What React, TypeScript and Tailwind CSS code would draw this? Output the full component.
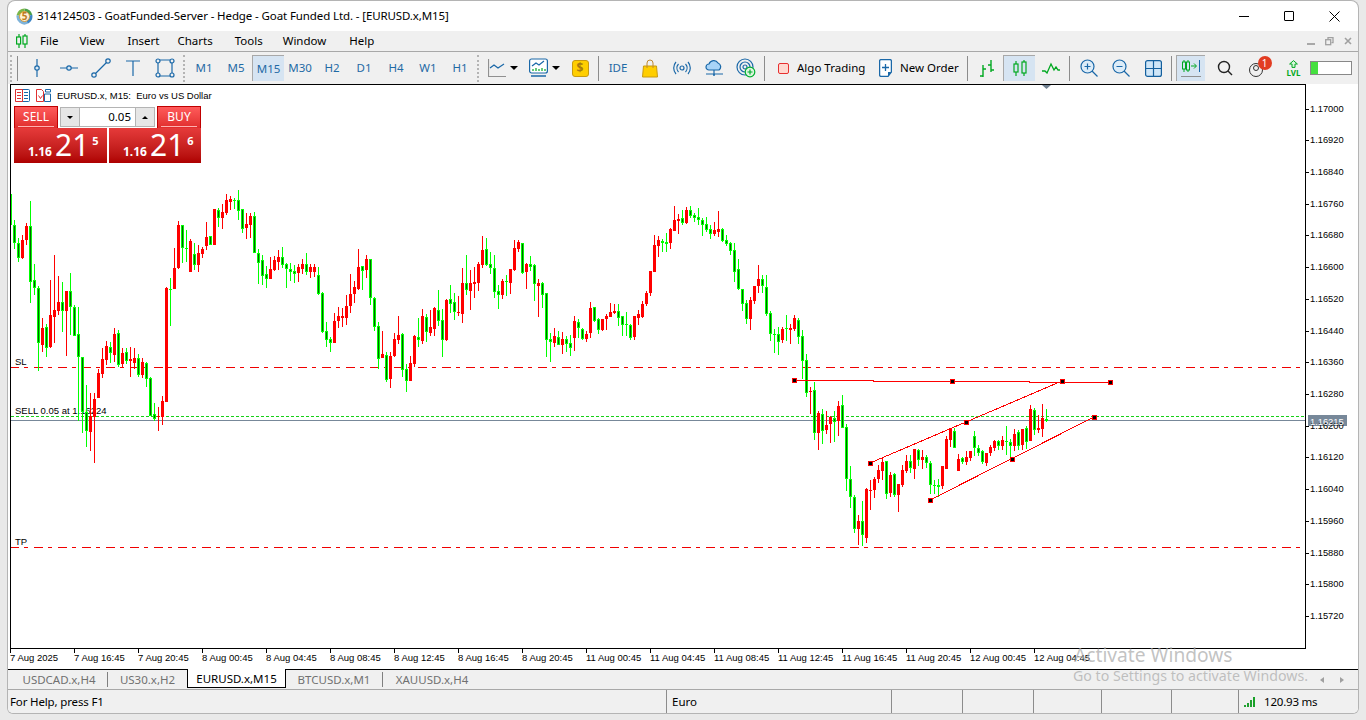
import React from 'react'

// candles read off the chart: colour, wick top, body top, body bottom, wick bottom
const GROUPS = [
  { ox: 0, oy: 180, start: 43, rows: 'g120,135,190,207 g175,190,235,245 r165,180,235,237 r130,138,180,195 g63,138,305,368 g252,300,325,345 g318,325,490,572 r415,443,495,515 g432,440,503,530 r300,405,502,505 r225,390,410,490 r288,365,392,405 g305,365,392,455 r333,333,392,528 g280,333,380,465 g375,380,468,468 g380,462,530,722 g530,530,695,760 g615,695,752,800 r640,708,755,812 r640,657,710,848 r568,578,655,655 r505,537,582,595 r482,497,540,555 g485,500,520,550 r445,462,525,545 g450,460,555,560 r505,518,552,565 g505,516,542,552 r500,538,542,592 r505,534,548,568 g522,535,585,590 r535,546,585,595 g545,550,598,622 g590,593,708,708 g670,702,718,722 r682,708,712,752 r648,662,710,735 r322,325,665,665 g295,326,328,437 r205,264,328,328 r122,135,265,268 g135,135,203,250 g150,203,208,245 r178,183,275,275 g190,222,255,270 r195,220,255,275 r200,207,222,235 r125,170,198,210 g168,168,195,195 r88,88,195,195 g85,90,113,142 r72,96,114,148 r42,60,100,105 r48,57,65,90 g55,60,62,88 g30,60,92,120 g87,88,147,160 r100,132,145,178 r100,108,135,175 g97,108,218,220 g208,220,248,312 g225,240,288,315 g258,282,296,323 r230,266,296,297 r228,240,270,272 r210,232,245,270 g200,232,255,265 g250,253,268,323 g250,268,275,302 g255,274,281,310 r252,260,280,305 r238,252,266,282 g220,252,275,285 r252,262,275,293 r253,262,277,290 g262,286,342,346 g335,340,455,458 g425,454,480,500 g470,478,488,515 r400,424,488,490 r380,408,422,443' },
  { ox: 340, oy: 190, start: 7, rows: 'r355,378,384,410 r315,347,384,405 r252,312,348,368 r273,291,312,340 r177,231,298,300 g228,228,243,300 r195,207,240,265 g207,207,323,345 g322,325,410,423 g395,408,506,537 r423,491,504,504 g487,495,570,575 r487,498,567,593 r430,447,498,500 r378,435,450,462 g430,432,540,562 g522,538,572,605 r498,519,573,573 r436,438,522,530 g384,441,450,471 r358,378,453,462 g372,381,426,457 r360,411,430,438 r350,354,417,438 g300,360,393,408 g358,390,450,500 r327,330,451,453 g285,327,342,370 g308,336,366,390 r318,366,370,378 r234,279,372,398 g195,279,300,316 r240,279,303,360 r232,276,282,323 r217,222,279,303 r138,180,225,233 g144,177,226,228 g187,222,234,252 g195,234,306,323 g285,303,315,357 r267,273,315,327 g255,273,275,318 r237,237,279,312 r150,174,240,242 r150,156,177,187 g158,159,249,251 r218,222,246,297 g198,222,231,243 g222,225,282,333 r267,279,288,381 g276,279,315,354 g309,309,450,501 g430,447,456,516 r414,438,458,471 g423,441,465,465 r426,447,465,492 g438,447,462,486 g435,459,474,498 r378,393,444,483 g387,396,414,444 g414,417,447,450 r423,432,447,456 r336,354,429,444 g351,351,393,396 g384,387,420,432 r387,387,420,423 r372,378,387,420 r339,366,381,381 r342,363,369,372 g342,363,384,408 g378,378,405,438 g366,402,405,438 g402,405,444,450 r378,378,441,450 r360,372,384,405 r333,342,381,384 r303,309,342,348 r243,243,309,318 r135,165,246,246 r138,150,168,201 g147,153,159,186 g129,156,162,186 r114,117,159,177 r48,90,123,123 r72,87,93,132' },
  { ox: 640, oy: 190, start: 127, rows: 'g60,85,98,105 r52,60,100,102 g48,60,78,84 g70,75,84,96 g54,81,90,105 g84,90,105,138 g81,102,120,126 g105,117,132,147 r96,120,132,138 r63,117,126,141 g114,117,153,156 g135,150,162,168 g156,159,183,195 g159,180,246,276 g207,237,297,300 g297,297,342,363 g330,339,387,402 r321,330,387,420 r288,288,333,342 r225,267,288,309 g255,267,288,309 g255,291,372,378 g363,369,432,453 g417,432,435,489 g411,432,456,495 r411,417,450,459 g375,414,417,453 r402,414,420,462 r375,384,417,423 g384,390,441,462 g420,438,513,567 g492,510,609,621 r590,602,606,672' },
  { ox: 790, oy: 360, start: 73, rows: 'g67,90,219,240 r153,159,219,270 g147,162,213,252 r153,195,210,222 r168,171,192,249 g153,174,186,246 r123,138,183,228 g105,135,204,204 g192,201,357,393 g318,357,411,444 g405,411,507,519 r465,483,507,555 g423,483,525,558 r384,387,534,549 r360,391,393,450 r351,357,390,414 r315,330,357,369 r294,306,333,360 g303,303,402,417 r336,345,399,411 g339,342,405,411 r372,372,405,456 r315,330,375,381 r285,303,333,339 g285,303,324,339 r267,267,327,357 g267,270,300,318 r270,291,300,327 g285,291,309,324 g303,309,375,402 g360,375,378,402 g357,375,381,411 r318,318,378,387 r228,237,327,327 r204,207,240,261 g204,213,263,263 r282,297,333,333 g291,294,306,312 r273,291,306,315 r273,273,294,303 g213,228,264,288 g255,264,279,288 g270,273,306,312 r279,279,309,318 r255,261,279,288 r240,243,264,273 g240,243,258,270 r228,240,258,270 g198,243,246,285 g237,246,258,300 r207,222,258,273 g210,216,258,270 r207,207,255,270 g198,204,246,267 r135,147,243,243 g144,150,210,225 r165,204,210,219 r132,174,207,231 g147,177,183,186' },
]

const candles = GROUPS.flatMap((g) =>
  g.rows.split(' ').map((row, i) => {
    const [top, bt, bb, bot] = row.slice(1).split(',').map((n) => Math.round(g.oy + Number(n) / 3))
    return { up: row[0] === 'g', x: Math.floor(g.ox + (g.start + i * 12) / 3), top, bt, bb, bot }
  })
)

const PRICES = ['1.17000', '1.16920', '1.16840', '1.16760', '1.16680', '1.16600', '1.16520', '1.16440', '1.16360', '1.16280', '1.16200', '1.16120', '1.16040', '1.15960', '1.15880', '1.15800', '1.15720']
const DATES = ['7 Aug 2025', '7 Aug 16:45', '7 Aug 20:45', '8 Aug 00:45', '8 Aug 04:45', '8 Aug 08:45', '8 Aug 12:45', '8 Aug 16:45', '8 Aug 20:45', '11 Aug 00:45', '11 Aug 04:45', '11 Aug 08:45', '11 Aug 12:45', '11 Aug 16:45', '11 Aug 20:45', '12 Aug 00:45', '12 Aug 04:45']
const PERIODS = ['M1', 'M5', 'M15', 'M30', 'H2', 'D1', 'H4', 'W1', 'H1']
const HANDLES = [[794, 380], [952, 381], [1110, 382], [870, 463], [966, 422], [1062, 381], [930, 500], [1012, 459], [1094, 417]]

const BLUE = '#1a68a8'

function Ic({ children, w = 24, h = 24 }: { children: React.ReactNode; w?: number; h?: number }) {
  return (
    <svg width={w} height={h} viewBox={`0 0 ${w} ${h}`} fill="none" strokeWidth="1.2">
      {children}
    </svg>
  )
}

function Tool({ children, active, w = 'w-[32px]' }: { children: React.ReactNode; active?: boolean; w?: string }) {
  return (
    <div className={`${w} h-[26px] shrink-0 flex items-center justify-center ${active ? 'bg-[#d6e4f2] border-l border-t border-[#a8a8a8]' : ''}`}>
      {children}
    </div>
  )
}

const Sep = ({ cls }: { cls: string }) => <div className={`w-px h-[25px] bg-[#8c8c8c] shrink-0 ${cls}`} />

const Grip = ({ cls }: { cls: string }) => (
  <div className={`w-[2px] h-[27px] shrink-0 border-l-2 border-dotted border-[#b4b4b4] ${cls}`} />
)

const Caret = () => <span className="w-0 h-0 border-x-[4px] border-x-transparent border-t-[4px] border-t-black ml-[4px]" />

function Chart() {
  return (
    <svg width="1350" height="585" viewBox="8 84 1350 585" className="block font-['Liberation_Sans',sans-serif]">
      <text x="15" y="365" className="text-[9.5px] fill-black">SL</text>
      <text x="15" y="545" className="text-[9.5px] fill-black">TP</text>
      <text x="15" y="414" className="text-[9.5px] fill-black">SELL 0.05 at 1.16224</text>
      <g shapeRendering="crispEdges">
        <line x1="10" x2="1301" y1="367.5" y2="367.5" stroke="#f00000" strokeDasharray="9 5 4 6" />
        <line x1="10" x2="1301" y1="547.5" y2="547.5" stroke="#f00000" strokeDasharray="9 5 4 6" />
        <line x1="11" x2="1305" y1="420.5" y2="420.5" stroke="#778899" />
        <line x1="11" x2="1305" y1="416.5" y2="416.5" stroke="#18d018" strokeDasharray="3 2" />
        <rect x="11" y="194" width="1" height="31" fill="#00ff00" />
        {candles.map((c, i) => (
          <g key={i}>
            <rect x={c.x} y={c.top} width="1" height={Math.max(c.bot - c.top, 1)} fill={c.up ? '#00ff00' : '#ff0000'} />
            <rect x={c.x - 1} y={c.bt} width="3" height={Math.max(c.bb - c.bt, 1)} fill={c.up ? '#00ff00' : '#ff0000'} />
            {c.up && c.bb - c.bt > 2 && <rect x={c.x} y={c.bt + 1} width="1" height={c.bb - c.bt - 2} fill="#006400" />}
          </g>
        ))}
        <polyline points="794,380 873,380.5 873,381.5 1029,381.5 1029,382.5 1110,382.5" stroke="#ff0000" fill="none" />
        <line x1="870" y1="463" x2="1062" y2="381" stroke="#ff0000" />
        <line x1="930" y1="500" x2="1094" y2="417" stroke="#ff0000" />
        {HANDLES.map(([x, y]) => (
          <g key={x}>
            <rect x={x - 2} y={y - 2} width="5" height="5" fill="#ff0000" />
            <rect x={x - 1} y={y - 1} width="3" height="3" fill="#000" />
          </g>
        ))}
        <rect x="10.5" y="84.5" width="1295" height="564" fill="none" stroke="#000" />
        {PRICES.map((p, i) => (
          <line key={p} x1="1305" x2="1309" y1={Math.round(108.5 + i * 31.72) + 0.5} y2={Math.round(108.5 + i * 31.72) + 0.5} stroke="#000" />
        ))}
        {DATES.map((d, i) => (
          <line key={d} x1={10.5 + i * 64} x2={10.5 + i * 64} y1="648" y2="653" stroke="#000" />
        ))}
        <rect x="1308" y="415" width="39" height="11" fill="#778899" />
      </g>
      {PRICES.map((p, i) => (
        <text key={p} x="1310" y={Math.round(108.5 + i * 31.72) + 3} className="text-[9.3px] fill-black">{p}</text>
      ))}
      <text x="1310" y="424.5" className="text-[9.3px] fill-white">1.16215</text>
      {DATES.map((d, i) => (
        <text key={d} x={10 + i * 64} y="661" className="text-[9.5px] fill-black">{d}</text>
      ))}
      <polygon points="1042,85 1051,85 1046.5,89" fill="#708090" />
    </svg>
  )
}

function BigPrice({ last, cls }: { last: string; cls: string }) {
  return (
    <div className={`h-[35px] bg-gradient-to-b from-[#e63a3a] to-[#ae0000] text-white flex items-end ${cls}`}>
      <span className="text-[12px] font-bold leading-none mb-[5px] ml-[14px]">1.16</span>
      <span className="text-[30px] leading-none mb-[3px] ml-[3px]">21</span>
      <span className="text-[11px] font-bold leading-none mb-[17px] ml-[3px]">{last}</span>
    </div>
  )
}

function TradePanel() {
  return (
    <div className="absolute left-[6px] top-[22px] w-[187px] flex flex-col">
      <div className="flex h-[22px] justify-between">
        <div className="w-[44px] bg-gradient-to-b from-[#ff5a5a] to-[#e02c2c] border-t border-x border-[#c00000] text-center">
          <div className="mx-[3px] h-[20px] border-b border-[#ffb0b0] text-white text-[12px] leading-[19px]">SELL</div>
        </div>
        <div className="w-[95px] h-[20px] mt-px flex border border-[#b4b4b4] bg-white">
          <div className="w-[19px] bg-[#e6e6e6] border-r border-[#b4b4b4] flex items-center justify-center">
            <span className="w-0 h-0 border-x-[3px] border-x-transparent border-t-[3px] border-t-black" />
          </div>
          <div className="flex-1 text-right pr-[4px] text-[11.5px] leading-[18px] text-black">0.05</div>
          <div className="w-[19px] bg-[#e6e6e6] border-l border-[#b4b4b4] flex items-center justify-center">
            <span className="w-0 h-0 border-x-[3px] border-x-transparent border-b-[3px] border-b-black" />
          </div>
        </div>
        <div className="w-[44px] bg-gradient-to-b from-[#ff5a5a] to-[#e02c2c] border-t border-x border-[#c00000] text-center">
          <div className="mx-[3px] h-[20px] border-b border-[#ffb0b0] text-white text-[12px] leading-[19px]">BUY</div>
        </div>
      </div>
      <div className="flex justify-between">
        <BigPrice last="5" cls="w-[93px]" />
        <BigPrice last="6" cls="w-[92px]" />
      </div>
    </div>
  )
}

export default function App() {
  return (
    <div className="w-[1366px] h-[720px] overflow-hidden bg-[#e9e9e9] pl-[8px] pr-[8px] pt-px pb-[7px] font-['Noto_Sans',sans-serif] text-black">
      <div className="relative w-[1350px] h-[712px] bg-white rounded-t-[7px] rounded-b-[5px] overflow-hidden shadow-[0_0_0_1px_#b4b4b4] flex flex-col">
        {/* Title bar */}
        <div className="h-[30px] shrink-0 flex items-center pl-[8px]">
          <svg width="17" height="17" viewBox="0 0 17 17">
            <path d="M8.5 .5a8 8 0 0 1 7.8 6.300L12 8a3.500 3.500 0 0 0-3.500-3z" fill="#4aa04a" />
            <path d="M16.300 6.800a8 8 0 0 1-4.500 9L10 12a3.500 3.500 0 0 0 2-4z" fill="#3d86c6" />
            <path d="M11.800 15.800A8 8 0 0 1 .6 7L5 8a3.500 3.500 0 0 0 5 4z" fill="#7fb3d9" />
            <path d="M.6 7A8 8 0 0 1 8.500 .5v4.500A3.500 3.500 0 0 0 5 8z" fill="#7ab648" />
            <circle cx="8.5" cy="8.5" r="5" fill="#fff3d8" stroke="#d59a3a" />
            <text x="8.5" y="12" textAnchor="middle" className="text-[10px] font-bold" fill="#c07a20">5</text>
          </svg>
          <span className="ml-[4px] text-[11.5px] tracking-[-0.11px]">314124503 - GoatFunded-Server - Hedge - Goat Funded Ltd. - [EURUSD.x,M15]</span>
          <div className="ml-auto flex items-center">
            <div className="w-[45px] flex justify-center"><span className="w-[10px] h-px bg-black" /></div>
            <div className="w-[45px] flex justify-center"><span className="w-[10px] h-[10px] border border-black rounded-[1px]" /></div>
            <div className="w-[46px] flex justify-center mr-[1px]">
              <svg width="11" height="11" viewBox="0 0 11 11" stroke="#000"><path d="M.5.5l10 10M10.500.5l-10 10" /></svg>
            </div>
          </div>
        </div>

        {/* Menu */}
        <div className="h-[21px] shrink-0 bg-[#f0f0f0] border-b border-[#a8a8a8] flex items-center pl-[8px] text-[11.5px]">
          <svg width="12" height="14" viewBox="0 0 12 14" fill="none" stroke="#00a820" strokeWidth="1.2">
            <path d="M3 0v14M9 0v14" />
            <rect x=".6" y="3" width="4" height="7" fill="#f0f0f0" />
            <rect x="7" y="2" width="4" height="8" fill="#f0f0f0" />
          </svg>
          <span className="ml-[12px]">File</span>
          <span className="ml-[21px]">View</span>
          <span className="ml-[23px]">Insert</span>
          <span className="ml-[18px]">Charts</span>
          <span className="ml-[22px]">Tools</span>
          <span className="ml-[20px]">Window</span>
          <span className="ml-[23px]">Help</span>
          <div className="ml-auto flex items-center gap-[10px] pr-[6px] text-[#a0a0a0]">
            <span className="w-[8px] h-[2px] mt-[5px] bg-[#a8a8a8]" />
            <svg width="9" height="9" viewBox="0 0 9 9" fill="none" stroke="#a0a0a0" strokeWidth="1.3"><rect x=".7" y="2.7" width="5" height="5" /><path d="M3 2V.7h5v5H6.500" /></svg>
            <svg width="8" height="8" viewBox="0 0 8 8" stroke="#a0a0a0" strokeWidth="1.6"><path d="M1 1l6 6M7 1L1 7" /></svg>
          </div>
        </div>

        {/* Toolbar */}
        <div className="h-[32px] shrink-0 bg-[#f0f0f0] flex items-center pl-[2px] text-[11.5px]">
          <Grip cls="" />
          <Sep cls="ml-[5px] mr-[3px]" />
          <Tool>
            <Ic><path d="M12 3v18" stroke={BLUE} /><circle cx="12" cy="12" r="2.2" fill="#d8e8f4" stroke={BLUE} /></Ic>
          </Tool>
          <Tool>
            <Ic><path d="M3 12h18" stroke={BLUE} /><circle cx="12" cy="12" r="2.2" fill="#d8e8f4" stroke={BLUE} /></Ic>
          </Tool>
          <Tool>
            <Ic><path d="M5 19L19 5" stroke={BLUE} /><circle cx="5" cy="19" r="2.2" fill="#f0f0f0" stroke={BLUE} /><circle cx="19" cy="5" r="2.2" fill="#f0f0f0" stroke={BLUE} /></Ic>
          </Tool>
          <Tool>
            <Ic><path d="M5 5h14M12 5v15" stroke={BLUE} /></Ic>
          </Tool>
          <Tool>
            <Ic><path d="M5 4h14M5 20h14M5 4v16M19 4v16" stroke={BLUE} /><circle cx="5" cy="5" r="2" fill="#f0f0f0" stroke={BLUE} /><circle cx="19" cy="5" r="2" fill="#f0f0f0" stroke={BLUE} /><circle cx="5" cy="19" r="2" fill="#f0f0f0" stroke={BLUE} /><circle cx="19" cy="19" r="2" fill="#f0f0f0" stroke={BLUE} /></Ic>
          </Tool>
          <Grip cls="ml-[2px] mr-[3px]" />
          {PERIODS.map((p) => (
            <Tool key={p} active={p === 'M15'}>
              <span className="text-[#1f6aa5]">{p}</span>
            </Tool>
          ))}
          <Grip cls="ml-[1px] mr-[3px]" />
          <Tool w="w-[42px]">
            <Ic w={18} h={18}><path d="M.5 0v17.500H18" stroke="#909090" /><path d="M2 9l4-3 4 3 6-4" stroke={BLUE} /></Ic>
            <Caret />
          </Tool>
          <Tool w="w-[40px]">
            <Ic w={19} h={20}>
              <rect x=".6" y="1" width="17.800" height="14" rx="2" fill="#fff" stroke={BLUE} />
              <path d="M3 8l4-3 3 2 5-4" stroke={BLUE} />
              <path d="M4 13v-2M7 13v-3M10 13v-2M13 13v-3M16 13v-2" stroke="#00a820" />
              <path d="M2 18h15" stroke={BLUE} strokeWidth="1.6" />
            </Ic>
            <Caret />
          </Tool>
          <Tool>
            <div className="w-[17px] h-[17px] rounded-[3px] bg-[#ffce00] border border-[#c89a10] flex items-center justify-center text-[12px] font-bold text-[#a87a10] leading-none">$</div>
          </Tool>
          <Sep cls="ml-[2px] mr-[3px]" />
          <Tool><span className="text-[#1f6aa5]">IDE</span></Tool>
          <Tool>
            <svg width="16" height="19" viewBox="0 0 16 19" fill="none">
              <path d="M1.500 7h13l1 11H.5z" fill="#ffce00" stroke="#c89a10" />
              <path d="M5 9V4a3 3 0 0 1 6 0v5" stroke="#c08a30" />
            </svg>
          </Tool>
          <Tool>
            <Ic w={18} h={14}>
              <circle cx="9" cy="7" r="2" stroke={BLUE} />
              <path d="M5.500 3a6 6 0 0 0 0 8M12.500 3a6 6 0 0 1 0 8M3 1a9 9 0 0 0 0 12M15 1a9 9 0 0 1 0 12" stroke={BLUE} />
            </Ic>
          </Tool>
          <Tool>
            <Ic w={18} h={17}>
              <path d="M4 10a3 3 0 0 1 0-6 5 5 0 0 1 9-1 4 4 0 0 1 1 7z" fill="#a8d4f8" stroke={BLUE} />
              <path d="M9 10v5M1 14h17" stroke={BLUE} />
              <circle cx="9" cy="15" r="1" fill={BLUE} />
            </Ic>
          </Tool>
          <Tool>
            <Ic w={20} h={20}>
              <circle cx="9" cy="9" r="8" stroke={BLUE} />
              <circle cx="9" cy="9" r="5" stroke={BLUE} />
              <circle cx="9" cy="9" r="2" stroke={BLUE} />
              <circle cx="14" cy="14" r="4.800" fill="#dff5df" stroke="#00b030" />
              <path d="M14 11.500v5M11.500 14h5" stroke="#00b030" />
            </Ic>
          </Tool>
          <Sep cls="ml-[2px] mr-[13px]" />
          <div className="w-[11px] h-[11px] rounded-[2px] bg-[#ffd8d0] border border-[#e83030] shrink-0" />
          <span className="ml-[8px] w-[82px] shrink-0">Algo Trading</span>
          <svg width="13" height="18" viewBox="0 0 13 18" fill="none" strokeWidth="1.3" className="shrink-0">
            <path d="M2 .6h9a1.400 1.400 0 0 1 1.400 1.400v11L9 17.400H2A1.400 1.400 0 0 1 .6 16V2A1.400 1.400 0 0 1 2 .6z" fill="#fff" stroke={BLUE} />
            <path d="M6.500 5v7M3 8.500h7" stroke={BLUE} />
            <path d="M9 17.400V13h3.400z" fill={BLUE} />
          </svg>
          <span className="ml-[8px] w-[67px] shrink-0">New Order</span>
          <Sep cls="mr-[3px]" />
          <Tool>
            <Ic w={18} h={18}>
              <path d="M5 6v12M2 17h3M5 10h3M13 1v12M10 6h3M13 11h3" stroke="#00a820" strokeWidth="1.4" />
            </Ic>
          </Tool>
          <Tool active>
            <Ic w={14} h={17}>
              <path d="M3 1v15M11 0v16" stroke="#00a820" />
              <rect x="1" y="4" width="4" height="8" fill="#d6e4f2" stroke="#00a820" />
              <rect x="9" y="2" width="4" height="11" fill="#d6e4f2" stroke="#00a820" />
            </Ic>
          </Tool>
          <Tool>
            <Ic w={18} h={12}>
              <path d="M0 9h3l2 2 4-9 3 6 2-3 2 3h2" stroke="#00a820" strokeWidth="1.3" />
            </Ic>
          </Tool>
          <Sep cls="ml-[2px] mr-[3px]" />
          <Tool>
            <Ic w={18} h={18}>
              <circle cx="7.500" cy="7.500" r="6.500" fill="#dcecf8" stroke={BLUE} />
              <path d="M12 12l5.500 5.500" stroke={BLUE} />
              <path d="M7.500 4.500v6M4.500 7.500h6" stroke={BLUE} />
            </Ic>
          </Tool>
          <Tool>
            <Ic w={18} h={18}>
              <circle cx="7.500" cy="7.500" r="6.500" fill="#dcecf8" stroke={BLUE} />
              <path d="M12 12l5.500 5.500" stroke={BLUE} />
              <path d="M4.500 7.500h6" stroke={BLUE} />
            </Ic>
          </Tool>
          <Tool>
            <svg width="17" height="17" viewBox="0 0 17 17" fill="#cfe6f8" stroke="#14609e" strokeWidth="1.2">
              <rect x=".6" y=".6" width="15.800" height="15.800" rx="2" />
              <path d="M8.500 .6v15.800M.6 8.500h15.800" />
            </svg>
          </Tool>
          <Sep cls="ml-[2px] mr-[4px]" />
          <Tool active w="w-[29px]">
            <svg width="20" height="19" viewBox="0 0 20 19" fill="none">
              <path d="M3 1v12M7 1v12" stroke="#00a820" />
              <rect x="1.500" y="3" width="3" height="7" fill="#d6e4f2" stroke="#00a820" />
              <rect x="5.500" y="3" width="3" height="8" fill="#d6e4f2" stroke="#00a820" />
              <path d="M10 7h5M13 4.500L15.500 7 13 9.500" stroke="#00a820" />
              <path d="M18.500 1v12" stroke="#1a68a8" />
              <path d="M0 17.500h20" stroke="#909090" />
            </svg>
          </Tool>
          <div className="w-[4px] shrink-0" />
          <Tool>
            <Ic w={16} h={16}><circle cx="7" cy="7" r="5.500" stroke="#222" strokeWidth="1.4" /><path d="M11 11l4 4" stroke="#222" strokeWidth="1.4" /></Ic>
          </Tool>
          <Tool>
            <div className="relative w-[14px] h-[14px] rounded-full border border-[#333] mt-[3px] mr-[3px]">
              <span className="absolute left-[3px] top-[1px] w-[6px] h-[6px] rounded-full border border-[#333]" />
              <span className="absolute -right-[10px] -top-[8px] w-[14px] h-[14px] rounded-full bg-[#e23c22] text-white text-[10px] leading-[14px] text-center">1</span>
            </div>
          </Tool>
          <div className="w-[4px] shrink-0" />
          <Tool w="w-[33px]">
            <div className="flex flex-col items-center text-[#00a820] leading-none mt-[1px]">
              <svg width="9" height="8" viewBox="0 0 9 8" fill="#d8f5dc" stroke="#00a820"><path d="M4.500 .6L8.400 4H6v3.400H3V4H.6z" /></svg>
              <span className="text-[8px] font-bold mt-[1px]">LVL</span>
            </div>
          </Tool>
          <div className="w-[42px] h-[14px] border border-[#888] bg-white shrink-0">
            <div className="w-[7px] h-full bg-[#45e03f]" />
          </div>
        </div>

        {/* Chart */}
        <div className="relative h-[585px] shrink-0 bg-white">
          <Chart />
          <div className="absolute left-[7px] top-[5px] flex items-center">
            <svg width="15" height="13" viewBox="0 0 15 13" fill="none">
              <rect x=".5" y=".5" width="14" height="12" rx="1" fill="#fff" stroke="#1a68a8" />
              <path d="M.5 .5H7.500v12H.5z" stroke="#e03030" />
              <path d="M2 3.500h4M2 6.500h4M2 9.500h4" stroke="#e03030" />
              <path d="M9 3.500h4M9 6.500h4M9 9.500h4" stroke="#1a68a8" />
            </svg>
            <svg width="15" height="13" viewBox="0 0 15 13" fill="none" className="ml-[6px]">
              <path d="M.5 .5h5l2 2v10H.5z" fill="#fff" stroke="#e03030" />
              <path d="M2.500 6.500l2 3 2-3" stroke="#e03030" />
              <path d="M8.500 5h6v7.500h-6z" fill="#fff" stroke="#1a68a8" />
              <path d="M9.500 .5h5V3h-5z" stroke="#1a68a8" />
            </svg>
            <span className="ml-[6px] text-[9.5px] leading-none font-['Liberation_Sans',sans-serif] whitespace-pre">EURUSD.x, M15:  Euro vs US Dollar</span>
          </div>
          <TradePanel />
        </div>

        {/* Tabs */}
        <div className="h-[21px] shrink-0 bg-[#f0f0f0] border-t border-black border-b border-b-[#a8a8a8] flex pl-[3px] text-[11.5px] text-[#707070]">
          <div className="w-[97px] my-[2px] border-r border-[#808080] text-center leading-[15px]">USDCAD.x,H4</div>
          <div className="w-[79px] text-center leading-[19px]">US30.x,H2</div>
          <div className="w-[99px] h-[19px] -mt-px bg-white border-x border-b border-black text-center text-black leading-[19px]">EURUSD.x,M15</div>
          <div className="w-[97px] my-[2px] border-r border-[#808080] text-center leading-[15px]">BTCUSD.x,M1</div>
          <div className="w-[98px] text-center leading-[19px]">XAUUSD.x,H4</div>
          <div className="ml-auto flex items-center gap-[16px] pr-[14px]">
            <span className="w-0 h-0 border-y-[3px] border-y-transparent border-r-[4px] border-r-[#a0a0a0]" />
            <span className="w-0 h-0 border-y-[3px] border-y-transparent border-l-[4px] border-l-[#a0a0a0]" />
          </div>
        </div>

        {/* Status bar */}
        <div className="flex-1 bg-[#f0f0f0] flex items-stretch text-[11.5px] leading-[23px] pl-[2px]">
          <div className="w-[656px] tracking-[-0.15px]">For Help, press F1</div>
          <div className="w-[225px] border-l border-[#8c8c8c] pl-[5px]">Euro</div>
          <div className="w-[71px] border-l border-[#8c8c8c]" />
          <div className="w-[71px] border-l border-[#8c8c8c]" />
          <div className="w-[68px] border-l border-[#8c8c8c]" />
          <div className="w-[70px] border-l border-[#8c8c8c]" />
          <div className="w-[67px] border-l border-[#8c8c8c]" />
          <div className="flex-1 border-l border-[#8c8c8c] flex items-center pl-[5px]">
            <svg width="12" height="10" viewBox="0 0 12 10" fill="#20a030">
              <rect x="0" y="8" width="2" height="2" />
              <rect x="3" y="6" width="2" height="4" />
              <rect x="6" y="3" width="2" height="7" />
              <rect x="9" y="0" width="2" height="10" fill="#18a028" />
            </svg>
            <span className="ml-[8px] tracking-[-0.2px]">120.93 ms</span>
          </div>
        </div>

        {/* Windows watermark */}
        <div className="absolute left-[1065px] top-[644px] text-[#a8a8a8]/70 pointer-events-none leading-none">
          <div className="text-[19.2px] ml-px">Activate Windows</div>
          <div className="text-[14.2px] mt-[5px] whitespace-nowrap">Go to Settings to activate Windows.</div>
        </div>
      </div>
    </div>
  )
}
